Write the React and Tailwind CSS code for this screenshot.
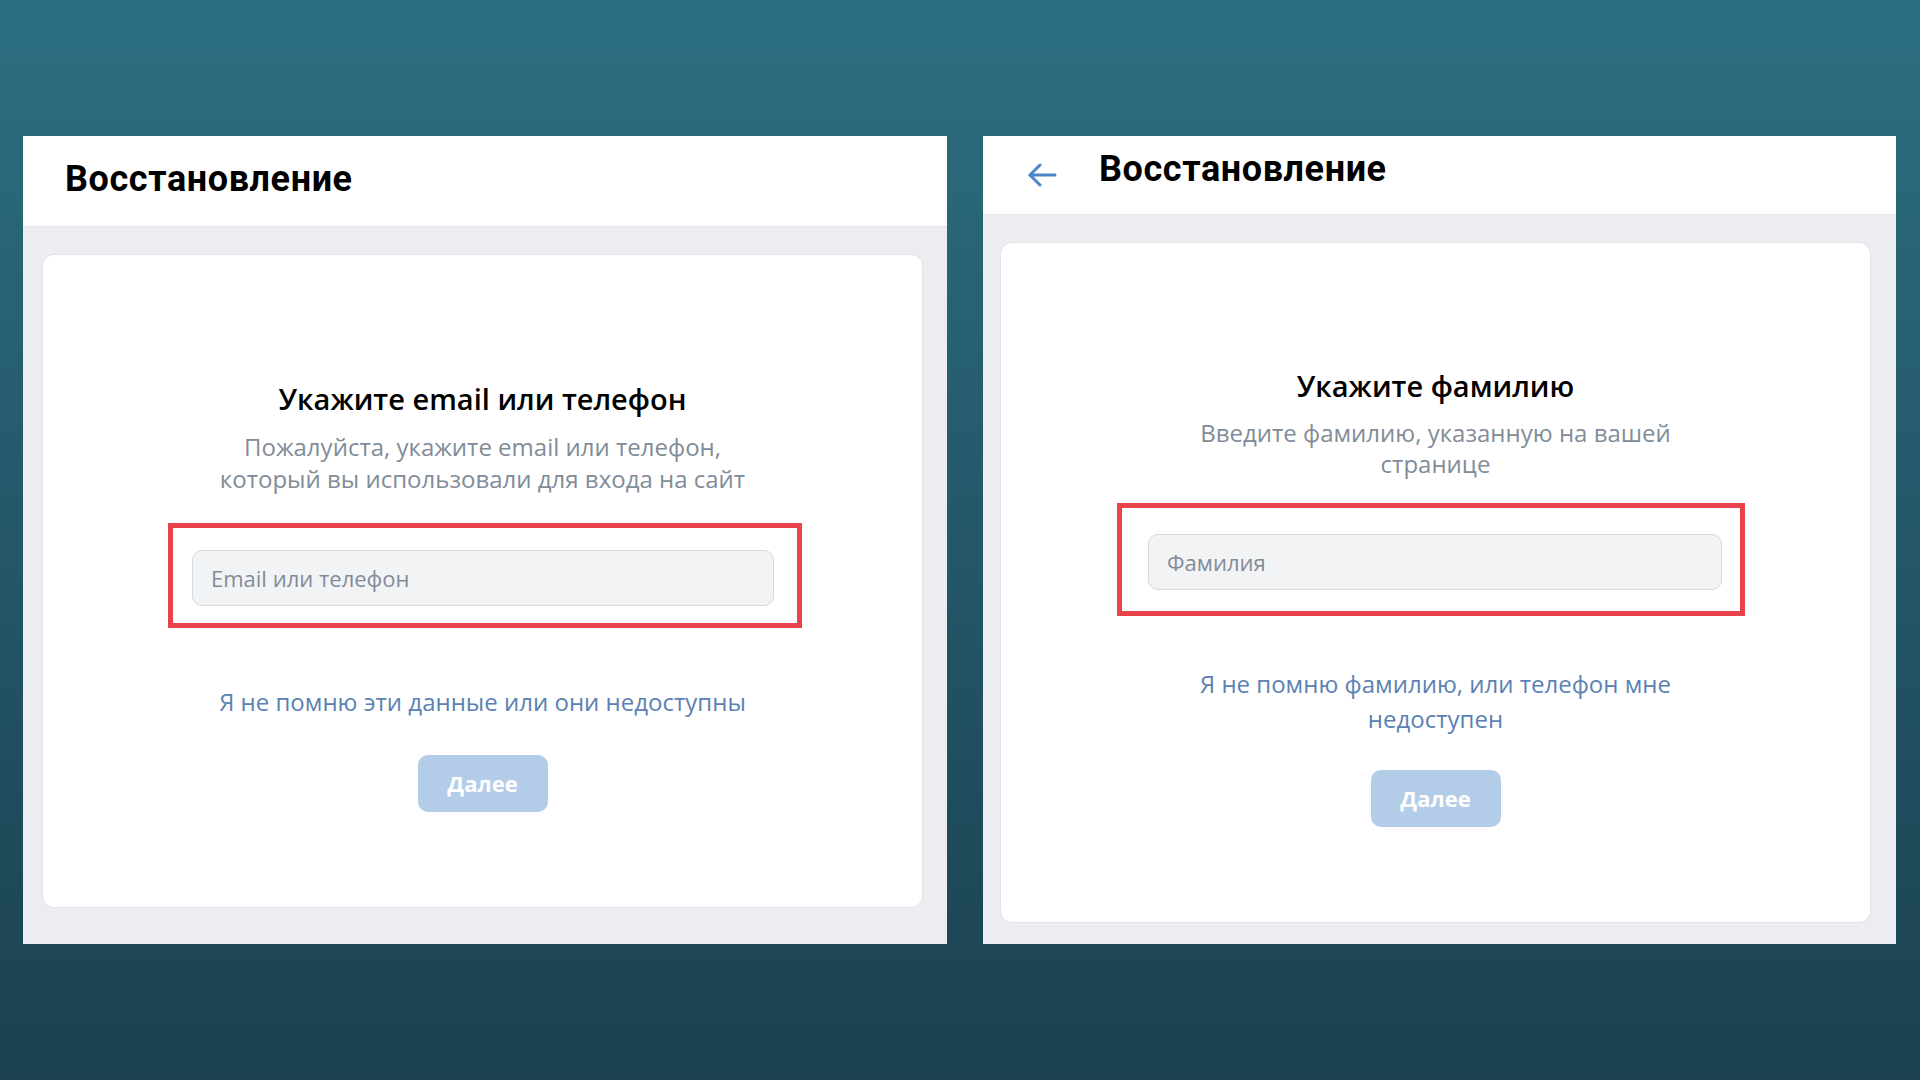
import React from 'react';

const sans = { fontFamily: '"Open Sans", "Liberation Sans", sans-serif' };

function BackArrow() {
  return (
    <svg width="30" height="24" viewBox="0 0 30 24" fill="none" stroke="#4a86c8" strokeWidth="3" strokeLinecap="round" strokeLinejoin="round">
      <path d="M3 12 H28" />
      <path d="M13 2 L3 12 L13 22" />
    </svg>
  );
}

function Header({ back, title }) {
  return (
    <div
      className={
        back
          ? 'flex items-center h-[79px] bg-white border-b border-[#e3e5e8] pl-[44px] gap-[42px]'
          : 'flex items-center h-[91px] bg-white border-b border-[#e3e5e8] pl-[42px]'
      }
    >
      {back && <BackArrow />}
      <h1
        className={
          back
            ? "font-['Roboto',sans-serif] font-bold text-[36px] leading-none text-black tracking-[0.6px] -mt-[12px]"
            : "font-['Roboto',sans-serif] font-bold text-[36px] leading-none text-black tracking-[0.6px] -mt-[4px]"
        }
      >
        {title}
      </h1>
    </div>
  );
}

function NextButton() {
  return (
    <button className="w-[130px] h-[57px] rounded-[10px] bg-[#b3cde9] text-white font-bold text-[22px]">
      Далее
    </button>
  );
}

function LeftPanel() {
  return (
    <section className="w-[924px] h-[808px] bg-[#ebedf0] flex flex-col">
      <Header title="Восстановление" />
      <div className="pt-[27px] pl-[19px] pr-[24px]">
        <div className="h-[654px] bg-white rounded-[12px] border border-[#e1e3e6] flex flex-col items-center pt-[126px]" style={sans}>
          <h2 className="text-[29px] leading-[36px] font-semibold text-black">Укажите email или телефон</h2>
          <p className="mt-[14px] text-[24px] leading-[32px] text-[#818c99] text-center">
            Пожалуйста, укажите email или телефон,
            <br />
            который вы использовали для входа на сайт
          </p>
          <div className="mt-[28px] w-[634px] h-[105px] border-[5px] border-[#e8424a] pl-[19px] pt-[22px] ml-[5px]">
            <div className="w-[582px] h-[56px] rounded-[10px] bg-[#f2f3f5] border border-[#d3d9de] flex items-center pl-[18px] text-[22px] text-[#818c99]">
              Email или телефон
            </div>
          </div>
          <a className="mt-[58px] text-[24px] leading-[32px] text-[#5b82b3]">
            Я не помню эти данные или они недоступны
          </a>
          <div className="mt-[37px]">
            <NextButton />
          </div>
        </div>
      </div>
    </section>
  );
}

function RightPanel() {
  return (
    <section className="w-[913px] h-[808px] bg-[#ebedf0] flex flex-col">
      <Header back title="Восстановление" />
      <div className="pt-[27px] pl-[17px] pr-[25px]">
        <div className="h-[681px] bg-white rounded-[12px] border border-[#e1e3e6] flex flex-col items-center pt-[125px]" style={sans}>
          <h2 className="text-[29px] leading-[36px] font-semibold text-black">Укажите фамилию</h2>
          <p className="mt-[13px] text-[24px] leading-[31px] text-[#818c99] text-center">
            Введите фамилию, указанную на вашей
            <br />
            странице
          </p>
          <div className="mt-[24px] w-[628px] h-[113px] border-[5px] border-[#e8424a] pl-[26px] pt-[26px] -ml-[9px]">
            <div className="w-[574px] h-[56px] rounded-[10px] bg-[#f2f3f5] border border-[#d3d9de] flex items-center pl-[18px] text-[22px] text-[#818c99]">
              Фамилия
            </div>
          </div>
          <a className="mt-[50px] text-[24px] leading-[35px] text-[#5b82b3] text-center">
            Я не помню фамилию, или телефон мне
            <br />
            недоступен
          </a>
          <div className="mt-[34px]">
            <NextButton />
          </div>
        </div>
      </div>
    </section>
  );
}

export default function App() {
  return (
    <div className="w-[1920px] h-[1080px] overflow-hidden bg-linear-to-b from-[#2c6f82] to-[#1b4150] flex items-start pl-[23px] pt-[136px] gap-[36px]">
      <LeftPanel />
      <RightPanel />
    </div>
  );
}
